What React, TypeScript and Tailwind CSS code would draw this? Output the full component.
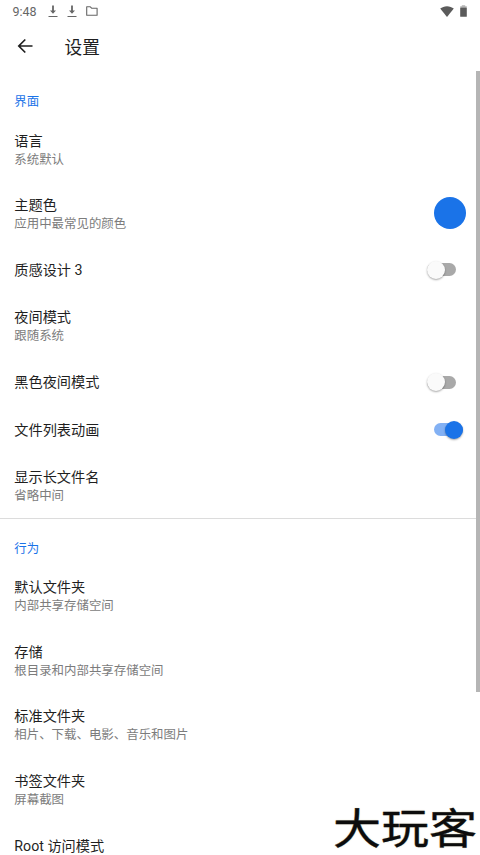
import React, { useState } from 'react';

interface Preference {
  title: string;
  summary?: string;
  color?: boolean;
  toggle?: boolean;
}

interface PreferenceCategory {
  name: string;
  items: Preference[];
}

const categories: PreferenceCategory[] = [
  {
    name: '界面',
    items: [
      { title: '语言', summary: '系统默认' },
      { title: '主题色', summary: '应用中最常见的颜色', color: true },
      { title: '质感设计 3', toggle: false },
      { title: '夜间模式', summary: '跟随系统' },
      { title: '黑色夜间模式', toggle: false },
      { title: '文件列表动画', toggle: true },
      { title: '显示长文件名', summary: '省略中间' },
    ],
  },
  {
    name: '行为',
    items: [
      { title: '默认文件夹', summary: '内部共享存储空间' },
      { title: '存储', summary: '根目录和内部共享存储空间' },
      { title: '标准文件夹', summary: '相片、下载、电影、音乐和图片' },
      { title: '书签文件夹', summary: '屏幕截图' },
      { title: 'Root 访问模式' },
    ],
  },
];

const DownloadIcon: React.FC = () => (
  <svg viewBox="0 0 10 13" className="w-[10px] h-[13px]" fill="#666666">
    <path d="M4.100 0.500h1.800v5h2.100L5 8.800 2 5.500h2.100z" />
    <path d="M0.500 11h9v1h-9z" />
  </svg>
);

const StatusBar: React.FC = () => (
  <div className="h-[22px] shrink-0 flex items-center pl-[12.500px] pr-[13px]">
    <span className="w-[35.500px] pt-px text-[12.500px] leading-[22px] text-[#666666]">9:48</span>
    <DownloadIcon />
    <span className="w-[9px]" />
    <DownloadIcon />
    <svg viewBox="0 0 12 10" className="ml-[9px] w-[12px] h-[10px]" fill="none" stroke="#666666" strokeWidth="1.100" strokeLinejoin="round">
      <path d="M0.700 0.800h3.600l1.300 1.400h5.500v7H0.700z" />
    </svg>
    <svg viewBox="0 0 14 11" className="ml-auto w-[14px] h-[11px]" fill="#5b5b5b">
      <path d="M7 11 0.200 2.600C2 1.100 4.400 0.200 7 0.200s5 0.900 6.800 2.400z" />
    </svg>
    <svg viewBox="0 0 7 12" className="ml-[6px] mb-px w-[7px] h-[12px]" fill="#5b5b5b">
      <path d="M1.800 0.200h3.400v1h1.600v1.300H0.200V1.200h1.600z" opacity="0.450" />
      <rect x="0.200" y="2.500" width="6.600" height="9.300" rx="0.500" />
    </svg>
  </div>
);

const Switch: React.FC<{ checked: boolean; onChange: () => void }> = ({ checked, onChange }) => (
  <button
    type="button"
    role="switch"
    aria-checked={checked}
    onClick={onChange}
    className={`flex items-center h-[18px] w-[29px] ${checked ? 'mr-[3px] justify-end' : 'mr-[10px]'}`}
  >
    <span className={`flex items-center h-[13px] rounded-full ${checked ? 'w-[29px] justify-end bg-[#83b1f4]' : 'w-[29px] bg-[#a9a9a9]'}`}>
      <span
        className={`size-[18px] shrink-0 rounded-full shadow-[0_1px_2px_rgba(0,0,0,0.35)] ${checked ? 'bg-[#1a73e8]' : 'bg-[#fafafa]'}`}
      />
    </span>
  </button>
);

const PreferenceRow: React.FC<{ item: Preference }> = ({ item }) => {
  const [checked, setChecked] = useState(!!item.toggle);

  return (
    <div className={`shrink-0 flex items-center pl-[14.300px] pr-[14.500px] ${item.summary ? 'h-[64.600px]' : 'h-[47.500px]'}`}>
      <div className="flex-1">
        <div className="text-[14.200px] leading-[18px] text-[#1f1f1f]">{item.title}</div>
        {item.summary && <div className="-mb-px pt-px text-[12.450px] leading-[17px] text-[#7c7c7c]">{item.summary}</div>}
      </div>
      {item.color && <span className="mb-[1.500px] size-[32px] rounded-full bg-[#1a73e8]" />}
      {item.toggle !== undefined && <Switch checked={checked} onChange={() => setChecked(!checked)} />}
    </div>
  );
};

const App: React.FC = () => {
  return (
    <div className="relative flex flex-col w-[480px] h-[855px] overflow-hidden bg-white font-['Roboto','Noto_Sans_CJK_SC',sans-serif]">
      <StatusBar />
      <header className="h-[49px] shrink-0 flex items-center pl-[17px]">
        <svg viewBox="0 0 16 16" className="mb-px w-[16px] h-[16px]" fill="none" stroke="#1f1f1f" strokeWidth="1.700">
          <path d="M15.500 8H2M8.300 1.500 1.800 8l6.500 6.500" />
        </svg>
        <h1 className="pt-[2px] ml-[31.500px] text-[17.700px] leading-[24px] text-[#1f1f1f]">设置</h1>
      </header>
      <div className="flex-1 min-h-0 flex">
        <main className="flex-1 flex flex-col overflow-hidden -mr-[4px]">
          {categories.map((category, index) => (
            <section key={category.name} className={`shrink-0 flex flex-col ${index > 0 ? 'border-t border-[#dcdcdc]' : ''}`}>
              <h2 className={`pl-[14.300px] text-[12.450px] leading-[18px] text-[#1a73e8] ${index > 0 ? 'h-[44.600px] pt-[21.200px]' : 'h-[46px] pt-[22px]'}`}>
                {category.name}
              </h2>
              {category.items.map(item => (
                <PreferenceRow key={item.title} item={item} />
              ))}
            </section>
          ))}
        </main>
        <div className="relative w-[4px] h-[621px] bg-[#b5b5b5]" />
      </div>
      <div className="absolute right-[3px] bottom-[4px] text-[48px] leading-[48px] font-normal text-[#0c0c0c] origin-bottom scale-y-[0.880] [-webkit-text-stroke:0.4px_#0c0c0c] [text-shadow:0_0_2px_#d8d2b0] whitespace-nowrap">
        大玩客
      </div>
    </div>
  );
};

export default App;
